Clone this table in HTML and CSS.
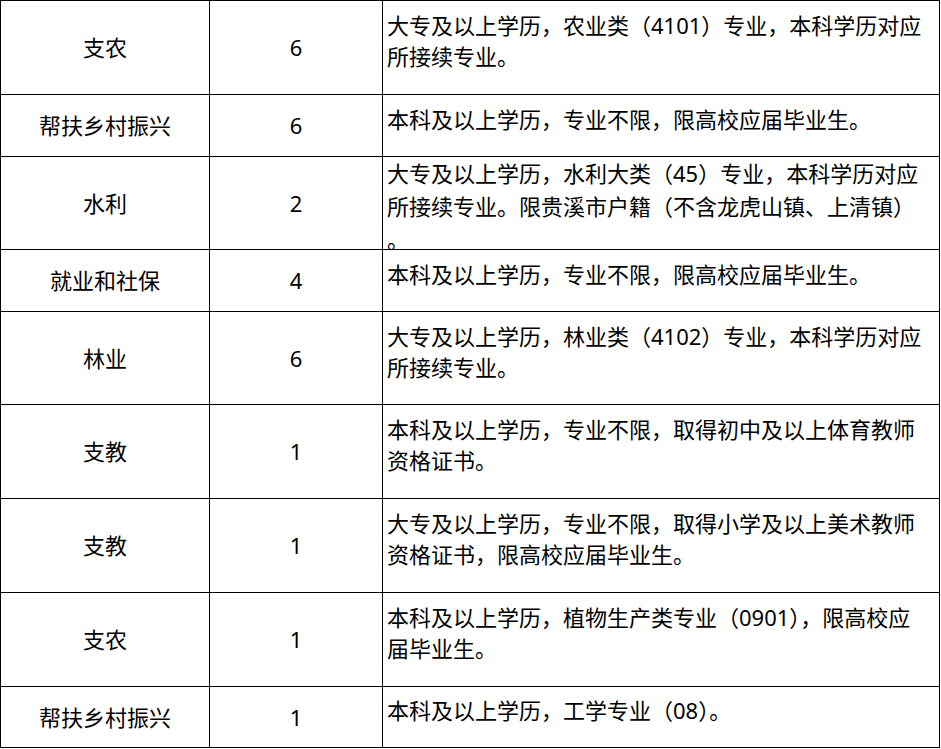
FILE: index.html
```html
<!DOCTYPE html>
<html lang="zh-CN">
<head>
<meta charset="utf-8">
<title>岗位表</title>
<link rel="stylesheet" href="styles.css">
</head>
<body>
<div class="grid">
  <div class="row r94">
    <div class="cell c1">支农</div>
    <div class="cell c2">6</div>
    <div class="cell c3"><div class="txt">大专及以上学历，农业类（4101）专业，本科学历对应<br>所接续专业。</div></div>
  </div>
  <div class="row r62">
    <div class="cell c1">帮扶乡村振兴</div>
    <div class="cell c2">6</div>
    <div class="cell c3"><div class="txt">本科及以上学历，专业不限，限高校应届毕业生。</div></div>
  </div>
  <div class="row r93">
    <div class="cell c1">水利</div>
    <div class="cell c2">2</div>
    <div class="cell c3 top"><div class="txt tall">大专及以上学历，水利大类（45）专业，本科学历对应<br>所接续专业。限贵溪市户籍（不含龙虎山镇、上清镇）<br>。</div></div>
  </div>
  <div class="row r62">
    <div class="cell c1">就业和社保</div>
    <div class="cell c2">4</div>
    <div class="cell c3"><div class="txt">本科及以上学历，专业不限，限高校应届毕业生。</div></div>
  </div>
  <div class="row r93">
    <div class="cell c1">林业</div>
    <div class="cell c2">6</div>
    <div class="cell c3"><div class="txt">大专及以上学历，林业类（4102）专业，本科学历对应<br>所接续专业。</div></div>
  </div>
  <div class="row r94">
    <div class="cell c1">支教</div>
    <div class="cell c2">1</div>
    <div class="cell c3"><div class="txt">本科及以上学历，专业不限，取得初中及以上体育教师<br>资格证书。</div></div>
  </div>
  <div class="row r94">
    <div class="cell c1">支教</div>
    <div class="cell c2">1</div>
    <div class="cell c3"><div class="txt">大专及以上学历，专业不限，取得小学及以上美术教师<br>资格证书，限高校应届毕业生。</div></div>
  </div>
  <div class="row r94">
    <div class="cell c1">支农</div>
    <div class="cell c2">1</div>
    <div class="cell c3"><div class="txt">本科及以上学历，植物生产类专业（0901），限高校应<br>届毕业生。</div></div>
  </div>
  <div class="row r61">
    <div class="cell c1">帮扶乡村振兴</div>
    <div class="cell c2">1</div>
    <div class="cell c3"><div class="txt">本科及以上学历，工学专业（08）。</div></div>
  </div>
</div>
</body>
</html>
```

FILE: styles.css
```css
html, body {
  margin: 0;
  padding: 0;
  background: #ffffff;
}

body {
  font-family: "Noto Sans", "Noto Sans CJK SC", sans-serif;
  font-size: 22px;
  line-height: 31px;
  color: #000000;
}

.grid {
  width: 940px;
  box-sizing: border-box;
  border-left: 1px solid #000;
  border-top: 1px solid #000;
  display: flex;
  flex-direction: column;
}

.row {
  display: flex;
}

.r94 { height: 94px; }
.r93 { height: 93px; }
.r62 { height: 62px; }
.r61 { height: 61px; }

.cell {
  box-sizing: border-box;
  border-right: 1px solid #000;
  border-bottom: 1px solid #000;
  display: flex;
  align-items: center;
  min-height: 0;
}

.c1 {
  width: 209px;
  justify-content: center;
}

.c2 {
  width: 173px;
  justify-content: center;
}

.c3 {
  width: 557px;
  padding-left: 4px;
  justify-content: flex-start;
}

.c3.top {
  align-items: flex-start;
}

.txt {
  white-space: nowrap;
  margin-top: -13px;
}

.txt.tall {
  margin-top: 0;
  line-height: 33px;
}
```
